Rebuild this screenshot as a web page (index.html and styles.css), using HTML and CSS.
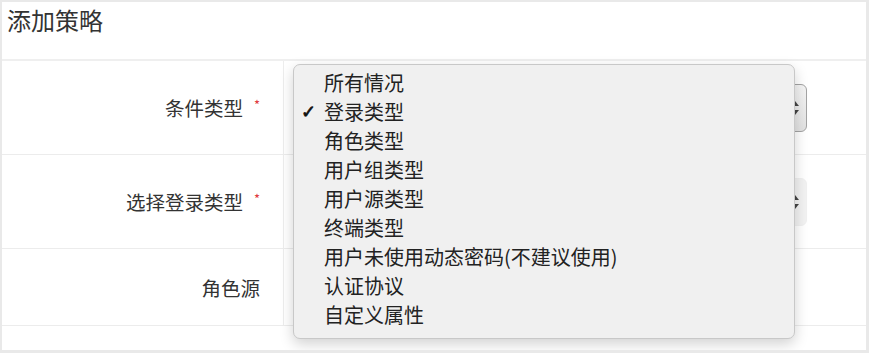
FILE: index.html
```html
<!DOCTYPE html>
<html lang="zh-CN">
<head>
    <meta charset="UTF-8"/>
    <meta name="viewport" content="width=device-width, initial-scale=1.0"/>
    <title>添加策略</title>
    <link rel="stylesheet" href="styles.css">
</head>
<body>
<div class="panel">
    <div class="panelTitle">添加策略</div>
    <div class="formRows">
        <div class="row">
            <div class="label">条件类型<i class="req">*</i></div>
            <div class="field">
                <div class="select">
                    <span class="arrow"></span>
                </div>
            </div>
        </div>
        <div class="row">
            <div class="label">选择登录类型<i class="req">*</i></div>
            <div class="field">
                <div class="select disabled">
                    <span class="arrow"></span>
                </div>
            </div>
        </div>
        <div class="row short">
            <div class="label">角色源</div>
            <div class="field"></div>
        </div>
    </div>

    <!-- 下拉菜单，盖在表单上面 -->
    <ul class="menu">
        <li>所有情况</li>
        <li class="checked">登录类型</li>
        <li>角色类型</li>
        <li>用户组类型</li>
        <li>用户源类型</li>
        <li>终端类型</li>
        <li>用户未使用动态密码(不建议使用)</li>
        <li>认证协议</li>
        <li>自定义属性</li>
    </ul>
</div>
</body>
</html>
```

FILE: styles.css
```css
* {
    margin: 0;
    padding: 0;
    box-sizing: border-box;
}

body {
    background: #e9e9e9;
    font-family: "Noto Sans CJK SC", "Noto Sans", sans-serif;
    color: #333;
}

.panel {
    position: relative;
    margin: 2px 3px 0 2px;
    height: 348px;
    background: #fff;
}

.panelTitle {
    height: 59px;
    padding-left: 5px;
    line-height: 36px;
    font-size: 24px;
    border-bottom: 2px solid #efefef;
}

.row {
    display: flex;
    height: 94px;
    border-bottom: 1px solid #ececec;
}

.row.short {
    height: 77px;
}

.row .label {
    width: 282px;
    padding-right: 23px;
    border-right: 1px solid #ededed;
    display: flex;
    align-items: center;
    justify-content: flex-end;
    font-size: 19.5px;
}

.req {
    font-style: normal;
    color: #e0393e;
    font-size: 13px;
    margin-left: 11px;
    margin-top: -6px;
}

.field {
    flex: 1;
    display: flex;
    align-items: center;
    padding-left: 12px;
}

.select {
    position: relative;
    width: 511px;
    height: 48px;
    border: 1px solid #a3a3a3;
    border-radius: 6px;
    background: linear-gradient(#f4f4f4, #e2e2e2);
}

.select.disabled {
    border-color: #f0f0f0;
    background: #f2f2f2;
}

/* 上下两个小三角 */
.arrow {
    position: absolute;
    right: 7px;
    top: 50%;
    margin-top: -7px;
    width: 8px;
    height: 14px;
}

.arrow::before,
.arrow::after {
    content: "";
    position: absolute;
    left: 0;
    border-left: 4px solid transparent;
    border-right: 4px solid transparent;
}

.arrow::before {
    top: 0;
    border-bottom: 5px solid #444;
}

.arrow::after {
    bottom: 0;
    border-top: 5px solid #444;
}

.menu {
    position: absolute;
    left: 291px;
    top: 62px;
    width: 502px;
    height: 275px;
    padding-top: 3px;
    list-style: none;
    background: #f0f0f0;
    border: 1px solid #c8c8c8;
    border-radius: 7px;
    box-shadow: 0 5px 14px rgba(0, 0, 0, 0.18);
}

.menu li {
    position: relative;
    height: 29px;
    line-height: 29px;
    padding-left: 30px;
    font-size: 20px;
    color: #222;
}

.menu li.checked::before {
    content: "✓";
    position: absolute;
    left: 7px;
    top: 0;
    font-family: "DejaVu Sans", sans-serif;
    font-weight: bold;
    font-size: 18px;
    color: #111;
    -webkit-text-stroke: 0.7px #111;
}
```
